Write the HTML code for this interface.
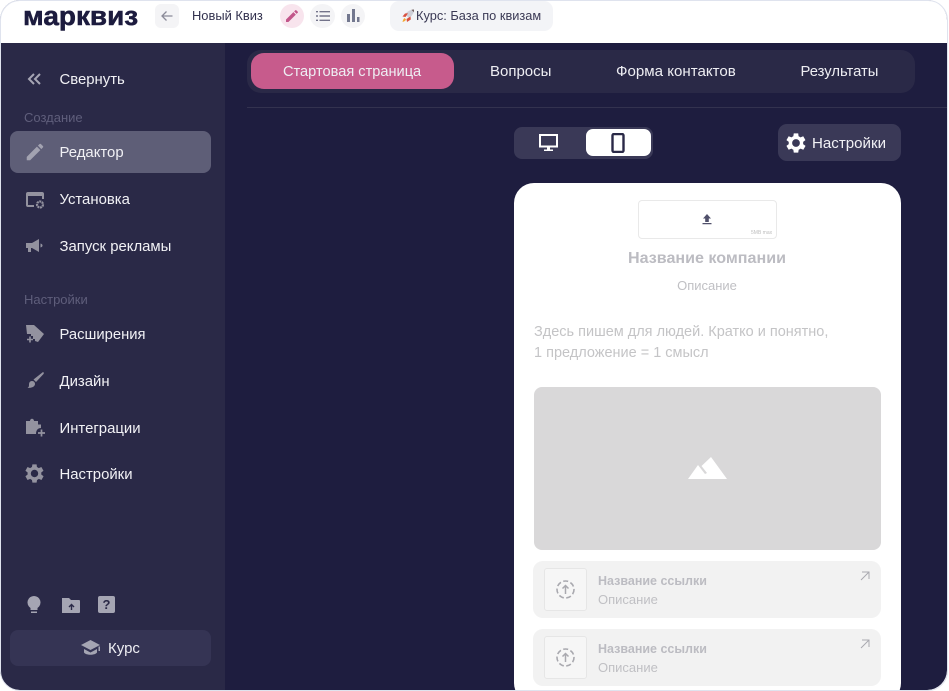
<!DOCTYPE html>
<html lang="ru"><head><meta charset="utf-8"><title>Марквиз</title>
<style>
*{box-sizing:border-box}
html,body{margin:0;padding:0;width:949px;height:691px;overflow:hidden;background:#fff;font-family:"Liberation Sans","Noto Sans CJK SC",sans-serif}
#frame{position:absolute;left:1px;top:0;width:946px;height:690px;border-radius:20px;overflow:hidden;background:#1e1d3f}
#outline{position:absolute;left:0;top:0;width:948px;height:691px;border:1px solid #dfe3ee;border-radius:20px;pointer-events:none}
.a{position:absolute}
.t{position:absolute;white-space:nowrap;line-height:20px}
svg{position:absolute;display:block}
.nav{color:#f1f1f5;font-size:14.9px}
.sec{color:#5f5e7b;font-size:13px}
.ic{fill:#93929f}
.tab{color:#eeeef3;font-size:14.6px;top:62px}
.link{position:absolute;left:533px;width:348px;height:57px;background:#f2f2f2;border-radius:10px}
.th{position:absolute;left:11px;top:7px;width:43px;height:43px;background:#f6f6f6;border:1px solid #e6e6e6;border-radius:3px}
</style></head><body>
<div id="frame" style="left:0;width:947px">
<!-- header -->
<div class="a" style="left:0;top:0;width:947px;height:43px;background:#fff"></div>
<div class="t" style="left:23px;top:2px;font-size:26.5px;font-weight:700;color:#1c1b3e;line-height:28px;-webkit-text-stroke:.5px #1c1b3e;transform:scaleX(1.055);transform-origin:left center">марквиз</div>
<div class="a" style="left:155px;top:4px;width:24px;height:24px;background:#f4f4f6;border-radius:6px"></div>
<svg style="left:160px;top:9px" width="14" height="14" viewBox="0 0 14 14"><path d="M12.5 7H2.5M6.500 2.500L2 7l4.500 4.500" fill="none" stroke="#8b8b99" stroke-width="1.300"/></svg>
<div class="t" style="left:192px;top:6px;font-size:12.9px;color:#33324f">Новый Квиз</div>
<div class="a" style="left:280px;top:4px;width:24px;height:24px;background:#f8e4ed;border-radius:50%"></div>
<svg style="left:284px;top:8px" width="16" height="16" viewBox="0 0 24 24"><path fill="#c2568a" d="M3 17.300V21h3.700L17.800 9.900l-3.700-3.700zM20.700 7a1 1 0 000-1.400l-2.300-2.300a1 1 0 00-1.400 0l-1.800 1.800 3.700 3.700z"/></svg>
<div class="a" style="left:310px;top:4px;width:25px;height:24px;background:#f4f4f6;border-radius:50%"></div>
<svg style="left:316px;top:10px" width="14" height="12" viewBox="0 0 14 12"><path fill="#73738a" d="M0 1h2v1.400H0zM3.500 1H14v1.400H3.500zM0 5.300h2v1.400H0zM3.500 5.300H14v1.400H3.500zM0 9.600h2V11H0zM3.500 9.600H14V11H3.500z"/></svg>
<div class="a" style="left:341px;top:4px;width:24px;height:24px;background:#f4f4f6;border-radius:50%"></div>
<svg style="left:346px;top:8px" width="14" height="15" viewBox="0 0 14 15"><path fill="#73788f" d="M1 6h3v8H1zM6 1h3v13H6zM11 9h2.500v5H11z"/></svg>
<div class="a" style="left:390px;top:1px;width:163px;height:30px;background:#f3f4f7;border-radius:9px"></div>
<svg style="left:401px;top:9px" width="14" height="14" viewBox="0 0 13 14"><path fill="#cfcfd8" d="M3.500 5.500C5.500 2.500 8.500.8 12.500.5c0 3.500-2 6.500-5 8.500z"/><path fill="#6d5a58" d="M10 .8l2.500-.3-.2 2.800z"/><path fill="#d9503f" d="M3.500 4.500l3-.3L4 8 1 7.500zM9 7.500l.3 3L5.500 13 5 10z"/><path fill="#f3a833" d="M3 9l1.500 1.500c-.5 1.500-2 2-3.500 2.500.3-1.500.8-3 2-4z"/></svg>
<div class="t" style="left:416px;top:6px;font-size:12.8px;color:#3b3a55">Курс: База по квизам</div>
<!-- sidebar -->
<div class="a" style="left:0;top:43px;width:225px;height:647px;background:#2a2947"></div>
<svg style="left:27px;top:72px" width="15" height="14" viewBox="0 0 15 14"><path d="M7 2L2 7l5 5M13 2L8 7l5 5" fill="none" stroke="#a6a5b4" stroke-width="2"/></svg>
<div class="t nav" style="left:59.500px;top:70px">Свернуть</div>
<div class="t sec" style="left:24px;top:108px">Создание</div>
<div class="a" style="left:10px;top:131px;width:201px;height:42px;background:#5e5e77;border-radius:8px"></div>
<svg style="left:24px;top:141px" width="22" height="22" viewBox="0 0 24 24"><path fill="#a3a3b1" d="M3 17.300V21h3.700L17.800 9.900l-3.700-3.700zM20.700 7a1 1 0 000-1.400l-2.300-2.300a1 1 0 00-1.400 0l-1.800 1.800 3.700 3.700z"/></svg>
<div class="t nav" style="left:59.500px;top:143px">Редактор</div>
<svg style="left:25px;top:190px" width="20" height="20" viewBox="0 0 20 20"><path class="ic" d="M3 2h14a2 2 0 012 2v5h-2V6H3v9h6v2H3a2 2 0 01-2-2V4a2 2 0 012-2z"/><circle cx="15" cy="14.500" r="3" fill="none" stroke="#93929f" stroke-width="2.200" stroke-dasharray="2 .6"/></svg>
<div class="t nav" style="left:59.500px;top:190px">Установка</div>
<svg style="left:25px;top:236px" width="20" height="20" viewBox="0 0 20 20"><path class="ic" d="M1 7h6l7-4v13l-7-4H6v4H3v-4H1zM15.500 7.500c1.500.5 2 1 2 2s-.5 1.500-2 2z"/></svg>
<div class="t nav" style="left:59.500px;top:237px">Запуск рекламы</div>
<div class="t sec" style="left:24px;top:290px">Настройки</div>
<svg style="left:25px;top:324px" width="20" height="21" viewBox="0 0 20 21"><path class="ic" d="M1 1h8l10 9-6 8-3-1v-2H8v-3H6v-2H2z"/><path d="M2 15.500h6M5 12.500v6" stroke="#93929f" stroke-width="1.600"/></svg>
<div class="t nav" style="left:59.500px;top:325px;font-size:14.800px">Расширения</div>
<svg style="left:25px;top:371px" width="20" height="20" viewBox="0 0 20 20"><path class="ic" d="M18 1c1 .5 1 1 .5 2L11 11 8.500 8.500zM7 10c2 0 3 1.500 3 3 0 2.500-3 4-7.500 4 1.500-1 1.500-2 1.500-3.500C4 11.500 5 10 7 10z"/></svg>
<div class="t nav" style="left:59.500px;top:372px">Дизайн</div>
<svg style="left:25px;top:417px" width="21" height="21" viewBox="0 0 21 21"><path class="ic" d="M1 4h4c0-3 4-3 4 0h4v3.500h3V11c-3 0-5 2-5 6H1z"/><path d="M13 16h7M16.500 12.500v7" stroke="#93929f" stroke-width="1.700"/></svg>
<div class="t nav" style="left:59.500px;top:419px">Интеграции</div>
<svg style="left:25px;top:464px" width="19" height="19" viewBox="3 3 18 18"><path class="ic" d="M19.400 13a7.500 7.500 0 000-2l2.100-1.600-2-3.500-2.500 1a7.500 7.500 0 00-1.700-1L15 3.300h-4l-.4 2.600a7.500 7.500 0 00-1.700 1l-2.500-1-2 3.500L6.500 11a7.500 7.500 0 000 2l-2.100 1.600 2 3.500 2.500-1c.5.4 1.100.7 1.700 1l.4 2.600h4l.4-2.600c.6-.3 1.200-.6 1.700-1l2.500 1 2-3.500zM13 15.500a3.500 3.500 0 110-7 3.500 3.500 0 010 7z" transform="translate(-1 0)"/></svg>
<div class="t nav" style="left:59.500px;top:465px">Настройки</div>
<svg style="left:26px;top:595px" width="16" height="20" viewBox="0 0 16 20"><path fill="#a5a5b3" d="M8 1a6.500 6.500 0 00-3.500 12v2h7v-2A6.500 6.500 0 008 1zM5 16.500h6V18H5z"/></svg>
<svg style="left:61px;top:597px" width="20" height="17" viewBox="0 0 20 17"><path fill="#a5a5b3" d="M1 1h7l2 2h8a1 1 0 011 1v11a1 1 0 01-1 1H1z"/><path d="M10.500 13V8M8 10l2.500-2.500L13 10" fill="none" stroke="#2a2947" stroke-width="1.400"/></svg>
<div class="a" style="left:98px;top:596px;width:17px;height:17px;background:#a5a5b3;border-radius:2px;color:#2a2947;font-size:13px;font-weight:700;text-align:center;line-height:17px">?</div>
<div class="a" style="left:10px;top:630px;width:201px;height:36px;background:#353454;border-radius:8px"></div>
<svg style="left:80px;top:639px" width="21" height="18" viewBox="0 0 21 18"><path fill="#a5a5b3" d="M10.500 1L1 6l9.500 5L20 6z"/><path fill="#a5a5b3" d="M4 10v3.500c2 3 11 3 13 0V10l-6.500 3.500zM18.500 7.500H20V12h-1.500z"/></svg>
<div class="t" style="left:108px;top:639px;font-size:15px;color:#eeeef3">Курс</div>
<!-- tabs -->
<div class="a" style="left:247px;top:50px;width:668px;height:43px;background:#2a2947;border-radius:14px"></div>
<div class="a" style="left:251px;top:53px;width:203px;height:36px;background:#c75b8c;border-radius:13px"></div>
<div class="t tab" style="left:283px">Стартовая страница</div>
<div class="t tab" style="left:490px;font-size:15px">Вопросы</div>
<div class="t tab" style="left:616px;font-size:15.1px">Форма контактов</div>
<div class="t tab" style="left:800.500px;font-size:14.8px">Результаты</div>
<div class="a" style="left:247px;top:107px;width:700px;height:1px;background:#33324f"></div>
<!-- device switch -->
<div class="a" style="left:514px;top:127px;width:139px;height:32px;background:#3a3957;border-radius:8px"></div>
<div class="a" style="left:586px;top:129px;width:65px;height:27px;background:#fff;border-radius:7px"></div>
<svg style="left:538px;top:133px" width="21" height="20" viewBox="0 0 21 20"><path d="M2 2h17v11.500H2z" fill="none" stroke="#fff" stroke-width="2"/><path d="M9 14h3v2.500h3V18H6v-1.500h3z" fill="#fff"/></svg>
<svg style="left:611px;top:133px" width="14" height="20" viewBox="0 0 14 20"><rect x="1.500" y="1" width="11" height="18" rx="1.500" fill="none" stroke="#2a2947" stroke-width="2.400"/></svg>
<div class="a" style="left:778px;top:124px;width:123px;height:37px;background:#3a3957;border-radius:9px"></div>
<svg style="left:786px;top:133px" width="20" height="20" viewBox="3 3 18 18"><path fill="#fff" d="M19.400 13a7.500 7.500 0 000-2l2.100-1.600-2-3.500-2.500 1a7.500 7.500 0 00-1.700-1L15 3.300h-4l-.4 2.600a7.500 7.500 0 00-1.700 1l-2.500-1-2 3.500L6.500 11a7.500 7.500 0 000 2l-2.100 1.600 2 3.500 2.500-1c.5.4 1.100.7 1.700 1l.4 2.600h4l.4-2.600c.6-.3 1.200-.6 1.700-1l2.500 1 2-3.500zM13 15.500a3.500 3.500 0 110-7 3.500 3.500 0 010 7z" transform="translate(-1 0)"/></svg>
<div class="t" style="left:812px;top:134px;font-size:15.1px;color:#f1f1f5">Настройки</div>
<!-- card -->
<div class="a" style="left:514px;top:183px;width:387px;height:520px;background:#fff;border-radius:20px"></div>
<div class="a" style="left:638px;top:200px;width:139px;height:39px;border:1px solid #e9e9e9;border-radius:4px;background:#fff"></div>
<svg style="left:702px;top:213px" width="10" height="12" viewBox="0 0 10 12"><path fill="#50506b" d="M5 1l4 4.500H6.800V9H3.200V5.500H1zM.5 10h9v1.200h-9z"/></svg>
<div class="t" style="left:751px;top:228px;font-size:5px;line-height:10px;color:#bdbdbd">5MB max</div>
<div class="t" style="left:514px;width:386px;text-align:center;top:248px;font-size:16.1px;font-weight:700;color:#bcbcc2">Название компании</div>
<div class="t" style="left:514px;width:386px;text-align:center;top:276px;font-size:13px;color:#c0c0c4">Описание</div>
<div class="t" style="left:534px;top:322px;font-size:14.5px;color:#c4c4c6">Здесь пишем для людей. Кратко и понятно,</div>
<div class="t" style="left:534px;top:343px;font-size:14.5px;color:#c4c4c6">1 предложение = 1 смысл</div>
<div class="a" style="left:534px;top:387px;width:347px;height:163px;background:#d9d8d9;border-radius:8px"></div>
<svg style="left:688px;top:457px" width="40" height="23" viewBox="0 0 40 23"><path fill="#fff" d="M0 22L10 8l7 9 2-1-5.500-7L23 0l16 22z"/></svg>
<!-- links -->
<div class="link" style="top:561px"><div class="th"></div>
<svg style="left:20px;top:16px" width="25" height="25" viewBox="0 0 25 25"><circle cx="12.500" cy="12.500" r="8.500" fill="none" stroke="#a9a9af" stroke-width="1.600" stroke-dasharray="5 2.500"/><path d="M12.500 17V9M9.500 11.500l3-3 3 3" fill="none" stroke="#a9a9af" stroke-width="1.500"/></svg>
<div class="t" style="left:65px;top:10px;font-size:12.500px;font-weight:700;color:#bcbcc2">Название ссылки</div>
<div class="t" style="left:65px;top:29px;font-size:13px;color:#c0c0c4">Описание</div>
<svg style="left:327px;top:10px" width="10" height="10" viewBox="0 0 10 10"><path d="M1 9l7.500-7.500M2 1h7v7" fill="none" stroke="#a9a9b0" stroke-width="1"/></svg></div>
<div class="link" style="top:629px"><div class="th"></div>
<svg style="left:20px;top:16px" width="25" height="25" viewBox="0 0 25 25"><circle cx="12.500" cy="12.500" r="8.500" fill="none" stroke="#a9a9af" stroke-width="1.600" stroke-dasharray="5 2.500"/><path d="M12.500 17V9M9.500 11.500l3-3 3 3" fill="none" stroke="#a9a9af" stroke-width="1.500"/></svg>
<div class="t" style="left:65px;top:10px;font-size:12.500px;font-weight:700;color:#bcbcc2">Название ссылки</div>
<div class="t" style="left:65px;top:29px;font-size:13px;color:#c0c0c4">Описание</div>
<svg style="left:327px;top:10px" width="10" height="10" viewBox="0 0 10 10"><path d="M1 9l7.500-7.500M2 1h7v7" fill="none" stroke="#a9a9b0" stroke-width="1"/></svg></div>
</div>
<div id="outline"></div>
</body></html>
